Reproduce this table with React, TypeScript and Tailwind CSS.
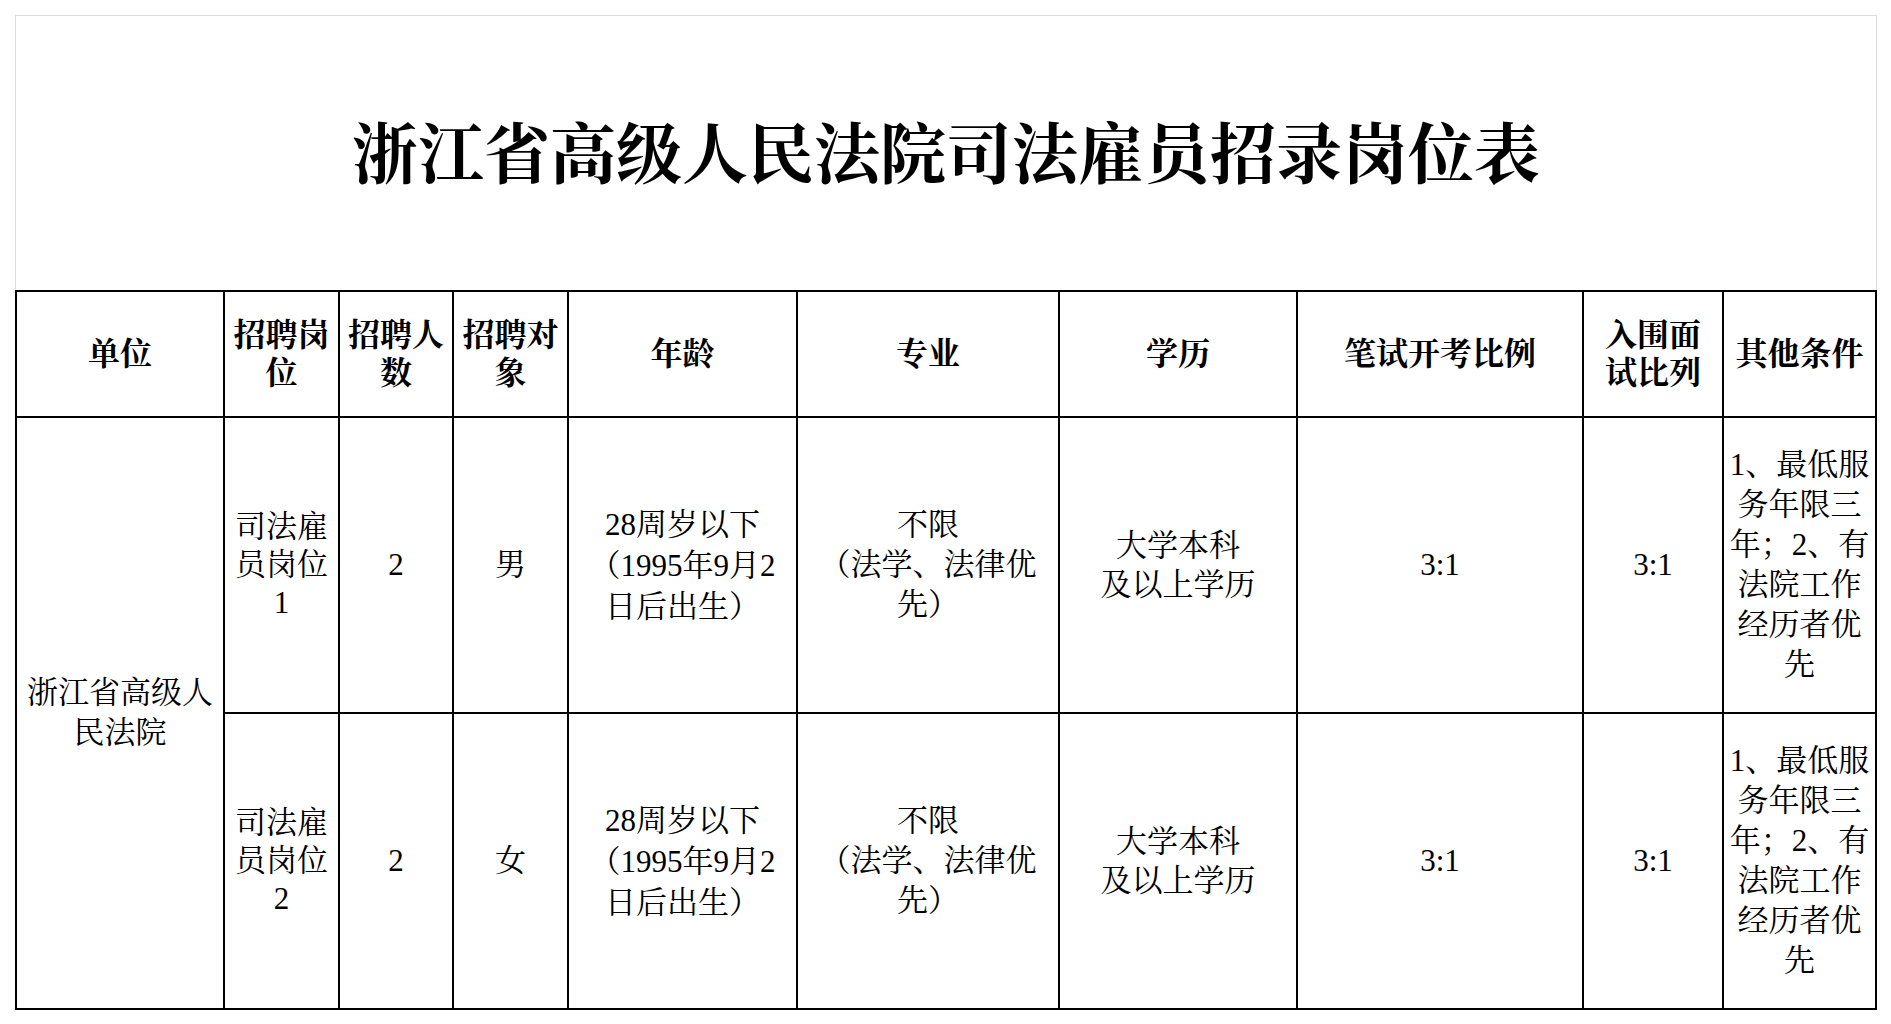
import React from "react";

const FONT = "font-['Liberation_Serif','Noto_Serif_CJK_SC','Noto_Sans_CJK_SC',serif]";

function Cell({
  lines,
  className = "",
  lh = "leading-[40px]",
}: {
  lines: string[];
  className?: string;
  lh?: string;
}) {
  return (
    <div className={`bg-white flex flex-col items-center justify-center text-center text-black ${lh} ${className}`}>
      {lines.map((l, i) => (
        <div key={i} className="whitespace-nowrap">
          {l}
        </div>
      ))}
    </div>
  );
}

function Head({ lines }: { lines: string[] }) {
  return <Cell lines={lines} lh="leading-[38px]" className="text-[32px] font-bold" />;
}

function Row({ idx, sex }: { idx: string; sex: string }) {
  return (
    <>
      <Cell lines={["司法雇", "员岗位", idx]} lh="leading-[38px]" className="text-[31px]" />
      <Cell lines={["2"]} className="text-[31px]" />
      <Cell lines={[sex]} className="text-[31px]" />
      <Cell lines={["28周岁以下", "（1995年9月2", "日后出生）"]} lh="leading-[41px]" className="text-[31px]" />
      <Cell lines={["不限", "（法学、法律优", "先）"]} lh="leading-[40px]" className="text-[31px]" />
      <Cell lines={["大学本科", "及以上学历"]} lh="leading-[39px]" className="text-[31px]" />
      <Cell lines={["3:1"]} className="text-[31px]" />
      <Cell lines={["3:1"]} className="text-[31px]" />
      <Cell
        lines={["1、最低服", "务年限三", "年；2、有", "法院工作", "经历者优", "先"]}
        lh="leading-[40px]"
        className="text-[31px]"
      />
    </>
  );
}

export default function App() {
  return (
    <div className={`min-h-screen bg-white ${FONT}`}>
      <div className="ml-[15px] pt-[15px] w-[1862px]">
        <div className="h-[275px] border-t border-x border-[#dcdcdc] flex items-center justify-center pt-[6px]">
          <h1 className="text-[66px] font-bold text-black leading-none">
            浙江省高级人民法院司法雇员招录岗位表
          </h1>
        </div>
        <div className="grid grid-cols-[206px_113px_112px_113px_227px_260px_236px_284px_138px_151px] grid-rows-[124px_294px_294px] gap-[2px] bg-black p-[2px]">
          <Head lines={["单位"]} />
          <Head lines={["招聘岗", "位"]} />
          <Head lines={["招聘人", "数"]} />
          <Head lines={["招聘对", "象"]} />
          <Head lines={["年龄"]} />
          <Head lines={["专业"]} />
          <Head lines={["学历"]} />
          <Head lines={["笔试开考比例"]} />
          <Head lines={["入围面", "试比列"]} />
          <Head lines={["其他条件"]} />

          <Cell
            lines={["浙江省高级人", "民法院"]}
            className="row-span-2 text-[31px]"
            lh="leading-[40px]"
          />
          <Row idx="1" sex="男" />
          <Row idx="2" sex="女" />
        </div>
      </div>
    </div>
  );
}
